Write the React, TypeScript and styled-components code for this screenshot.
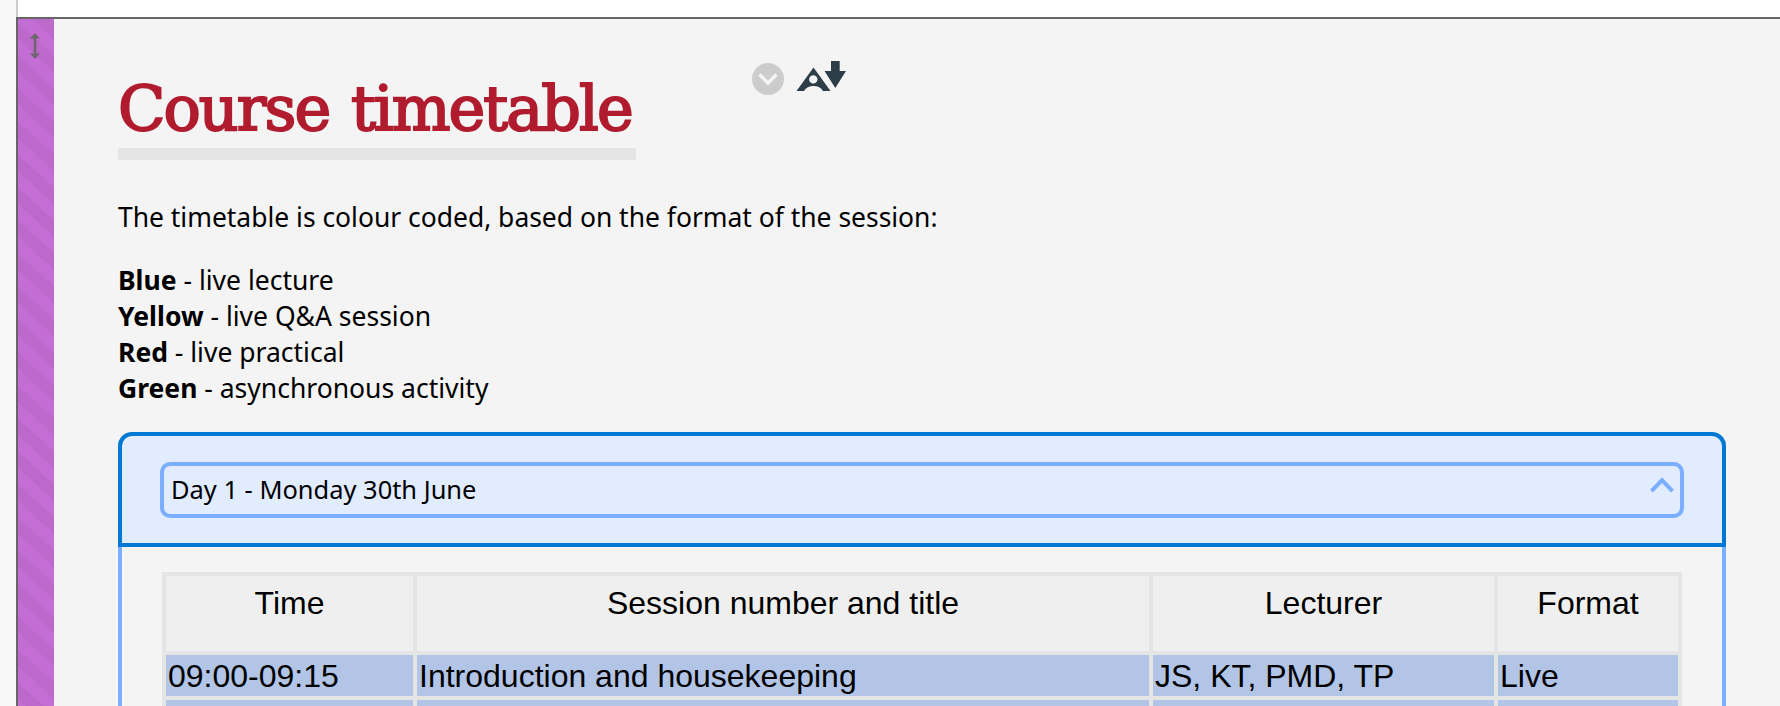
import React from "react";
import styled, { createGlobalStyle } from "styled-components";

const GlobalStyle = createGlobalStyle`
  * { box-sizing: border-box; }
  body { margin: 0; background: #f8f8f8; overflow: hidden; }
`;

const Page = styled.div`
  display: flex;
  width: 1780px;
  height: 706px;
  overflow: hidden;
  background: #f8f8f8;
  color: #000;
  font-family: "Noto Sans", sans-serif;
`;

const Gutter = styled.div`
  flex: 0 0 16px;
`;

const Workspace = styled.div`
  flex: 1;
  display: flex;
  flex-direction: column;
`;

const TopStrip = styled.div`
  flex: 0 0 17px;
  background: #fff;
  border-left: 2px solid #ccc;
`;

const Section = styled.section`
  flex: 1;
  min-height: 0;
  display: flex;
  border-top: 2px solid #666;
  border-left: 2px solid #666;
  background: #f4f4f4;
`;

const DragHandle = styled.div`
  flex: 0 0 36px;
  padding: 14px 0 0 12px;
  background: linear-gradient(
      to top right,
      #bc69cb 25%,
      #c46dd5 25% 50%,
      #bc69cb 50% 75%,
      #c46dd5 75%
    )
    0 -13px / 36px 33px;

  svg {
    display: block;
  }
`;

const Content = styled.main`
  width: 1672px;
  padding-left: 64px;
`;

const Heading = styled.header`
  display: flex;
  align-items: flex-start;
  height: 141px;
`;

const Title = styled.h1`
  width: 518px;
  height: 141px;
  margin: 0;
  padding-top: 50px;
  border-bottom: 12px solid #e5e5e5;
  color: #b01c2e;
  font: 400 62px/80px "DejaVu Serif", serif;
  letter-spacing: -1.95px;
  word-spacing: 4px;
  white-space: nowrap;
  -webkit-text-stroke: 2px #b01c2e;
`;

const Tools = styled.div`
  display: flex;
  gap: 12px;
  padding: 42px 0 0 116px;
`;

const Intro = styled.p`
  margin: 39px 0 0;
  font-size: 26.45px;
  line-height: 36px;
  white-space: nowrap;
`;

const Legend = styled.ul`
  margin: 27px 0 0;
  padding: 0;
  list-style: none;
  font-size: 26.5px;
  line-height: 36px;
`;

const Accordion = styled.div`
  width: 1608px;
  margin-top: 26px;
`;

const AccordionHeader = styled.div`
  height: 115px;
  padding: 26px 38px;
  border: 4px solid #0078d4;
  border-radius: 14px 14px 0 0;
  background: #e1ecff;
`;

const DayField = styled.div`
  display: flex;
  justify-content: space-between;
  height: 56px;
  padding: 3px 6px 0 7px;
  border: 4px solid #7baeff;
  border-radius: 10px;
  font-size: 25.45px;
  line-height: 40px;

  svg {
    margin-top: 7px;
  }
`;

const AccordionBody = styled.div`
  height: 200px;
  padding: 25px 40px 0;
  border: solid #7baeff;
  border-width: 0 4px;
`;

const Table = styled.div`
  display: grid;
  grid-template-columns: 247px 732px 341px 180px;
  grid-template-rows: 75px 41px 41px;
  gap: 4px;
  width: 1520px;
  padding: 4px;
  background: #e5e5e5;
  font: 32px/37px "Liberation Sans", Arial, sans-serif;
  white-space: nowrap;
`;

const HeadCell = styled.div`
  padding-top: 9px;
  background: #efefef;
  text-align: center;
`;

const Cell = styled.div`
  padding: 3px 2px;
  background: #b3c5e7;
`;

const legend = [
  ["Blue", "live lecture"],
  ["Yellow", "live Q&A session"],
  ["Red", "live practical"],
  ["Green", "asynchronous activity"],
];
const columns = ["Time", "Session number and title", "Lecturer", "Format"];
const session = ["09:00-09:15", "Introduction and housekeeping", "JS, KT, PMD, TP", "Live"];

export default function App() {
  return (
    <>
      <GlobalStyle />
      <Page>
        <Gutter />
        <Workspace>
          <TopStrip />
          <Section>
            <DragHandle>
              <svg width="10" height="26" viewBox="0 0 10 26" fill="#6d666f">
                <path d="M5 0 10 5.6H6.3V20.4H10L5 26 0 20.4H3.7V5.6H0Z" />
              </svg>
            </DragHandle>
            <Content>
              <Heading>
                <Title>Course timetable</Title>
                <Tools>
                  <svg width="32" height="36" viewBox="0 0 32 36">
                    <circle cx="16" cy="18" r="16" fill="#ccc" />
                    <path d="m7.5 13.5 8.5 8.5 8.5-8.5" fill="none" stroke="#f4f4f4" strokeWidth="3.6" />
                  </svg>
                  <svg width="51" height="32" viewBox="0 0 51 32" fill="#2d3e48">
                    <path
                      fillRule="evenodd"
                      d="M17.5 6.5 34.5 30H27Q24 25 17.5 25T8 30H.5ZM17.3 14.2a4.2 4.2 0 1 0 0 8.4 4.2 4.2 0 0 0 0-8.4Z"
                    />
                    <path d="M35 0H43.7V10H50L39.3 27 28.5 10H35Z" />
                  </svg>
                </Tools>
              </Heading>
              <Intro>The timetable is colour coded, based on the format of the session:</Intro>
              <Legend>
                {legend.map(([name, meaning]) => (
                  <li key={name}>
                    <strong>{name}</strong> - {meaning}
                  </li>
                ))}
              </Legend>
              <Accordion>
                <AccordionHeader>
                  <DayField>
                    Day 1 - Monday 30th June
                    <svg width="24" height="18" viewBox="0 0 24 18" fill="none" stroke="#7baeff" strokeWidth="4">
                      <path d="M1.5 15.2 12 4.2 22.5 15.2" />
                    </svg>
                  </DayField>
                </AccordionHeader>
                <AccordionBody>
                  <Table>
                    {columns.map((c) => (
                      <HeadCell key={c}>{c}</HeadCell>
                    ))}
                    {session.map((c) => (
                      <Cell key={c}>{c}</Cell>
                    ))}
                    {columns.map((c) => (
                      <Cell key={c} />
                    ))}
                  </Table>
                </AccordionBody>
              </Accordion>
            </Content>
          </Section>
        </Workspace>
      </Page>
    </>
  );
}
